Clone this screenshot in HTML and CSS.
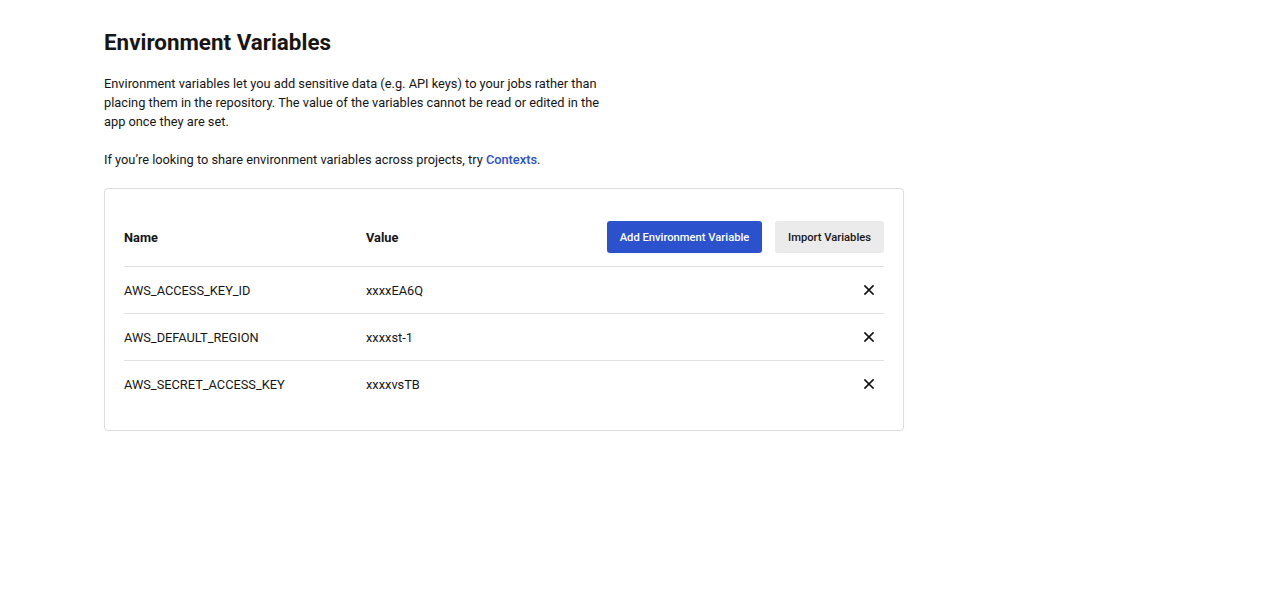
FILE: index.html
```html
<!DOCTYPE html>
<html>
<head>
<meta charset="utf-8">
<link rel="stylesheet" href="styles.css">
</head>
<body>
<main class="page">
  <h1 class="title">Environment Variables</h1>
  <p class="desc">Environment variables let you add sensitive data (e.g. API keys) to your jobs rather than placing them in the repository. The value of the variables cannot be read or edited in the app once they are set.</p>
  <p class="desc ctx">If you’re looking to share environment variables across projects, try <a class="link" href="#">Contexts</a>.</p>
  <section class="card">
    <div class="row head">
      <div class="c-name">Name</div>
      <div class="c-value">Value</div>
      <div class="actions">
        <button class="btn primary">Add Environment Variable</button>
        <button class="btn secondary">Import Variables</button>
      </div>
    </div>
    <div class="row">
      <div class="c-name">AWS_ACCESS_KEY_ID</div>
      <div class="c-value">xxxxEA6Q</div>
      <button class="del" aria-label="delete"><svg viewBox="0 0 10 10" width="10" height="10"><path d="M1 1L9 9M9 1L1 9" stroke="#111" stroke-width="1.7" stroke-linecap="square"/></svg></button>
    </div>
    <div class="row">
      <div class="c-name">AWS_DEFAULT_REGION</div>
      <div class="c-value">xxxxst-1</div>
      <button class="del" aria-label="delete"><svg viewBox="0 0 10 10" width="10" height="10"><path d="M1 1L9 9M9 1L1 9" stroke="#111" stroke-width="1.7" stroke-linecap="square"/></svg></button>
    </div>
    <div class="row">
      <div class="c-name">AWS_SECRET_ACCESS_KEY</div>
      <div class="c-value">xxxxvsTB</div>
      <button class="del" aria-label="delete"><svg viewBox="0 0 10 10" width="10" height="10"><path d="M1 1L9 9M9 1L1 9" stroke="#111" stroke-width="1.7" stroke-linecap="square"/></svg></button>
    </div>
  </section>
</main>
</body>
</html>
```
FILE: styles.css
```css
* { box-sizing: border-box; }
html, body { margin: 0; padding: 0; background: #fff; }
body {
  font-family: Roboto, "Liberation Sans", sans-serif;
  color: #161616;
  -webkit-font-smoothing: antialiased;
}
.page {
  padding: 29px 0 0 104px;
  width: 904px;
}
.title {
  margin: 0;
  font-size: 22.4px;
  line-height: 26px;
  font-weight: 700;
  color: #161616;
}
.desc {
  margin: 19px 0 0;
  width: 500px;
  font-size: 12.8px;
  line-height: 19px;
}
.ctx { margin-top: 19px; width: auto; }
.link {
  color: #2b52cc;
  font-weight: 500;
  text-decoration: none;
}
.card {
  margin-top: 19px;
  width: 800px;
  border: 1px solid #dcdcdc;
  border-radius: 4px;
  box-shadow: 0 1px 2px rgba(0,0,0,0.06);
  padding: 19px 19px 23px;
}
.row {
  display: flex;
  align-items: center;
  height: 47px;
  border-top: 1px solid #e2e2e2;
  font-size: 12.8px;
}
.row.head {
  height: 58px;
  border-top: none;
  font-weight: 700;
}
.c-name { width: 242px; }
.c-value { flex: 1; }
.actions {
  display: flex;
  gap: 13px;
}
.btn {
  font-family: inherit;
  font-size: 11.2px;
  font-weight: 500;
  height: 32px;
  border: none;
  border-radius: 3px;
  padding: 0;
  cursor: pointer;
}
.primary { background: #2b52cc; color: #fff; width: 155px; }
.secondary { background: #ebebeb; color: #161616; width: 109px; }
.del {
  background: none;
  border: none;
  padding: 0;
  margin-right: 10px;
  width: 10px;
  height: 10px;
  display: flex;
  cursor: pointer;
}
```
